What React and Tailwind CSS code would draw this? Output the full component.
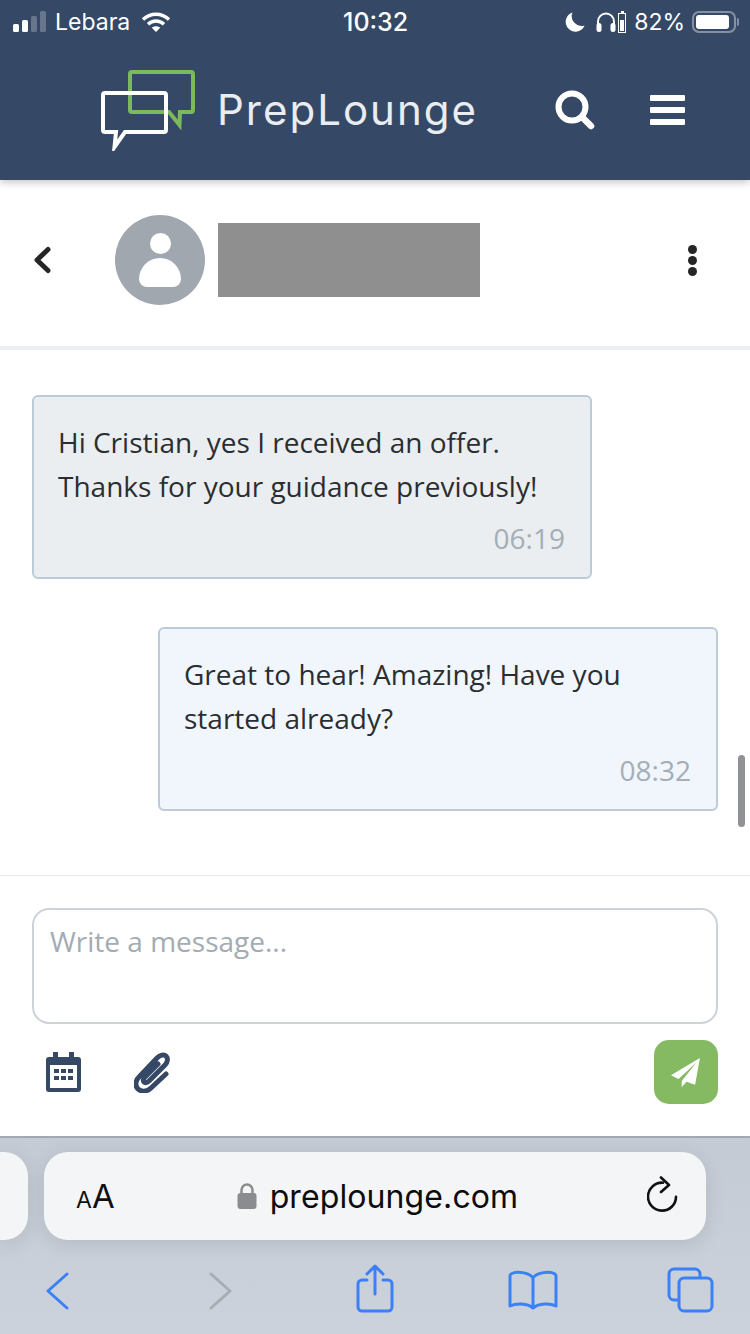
import React from 'react';

const sans = 'font-["Inter","Liberation_Sans",sans-serif]';
const body = 'font-["Open_Sans","Noto_Sans",sans-serif]';

const StatusBar = () => (
    <div className={`relative flex items-center h-[44px] pl-[13px] pr-[11px] text-white text-[23px] ${sans}`}>
        <svg width="34" height="22" viewBox="0 0 34 22" fill="white">
            <rect x="0" y="13" width="6" height="8" rx="1.5" />
            <rect x="9" y="9" width="6" height="12" rx="1.5" />
            <rect x="18" y="5" width="6" height="16" rx="1.5" opacity="0.25" />
            <rect x="27" y="0" width="6" height="21" rx="1.5" opacity="0.25" />
        </svg>
        <span className="ml-[8px] font-normal leading-none">Lebara</span>
        <svg className="ml-[11px]" width="30" height="22" viewBox="0 0 30 22" fill="none" stroke="white" strokeWidth="3.4">
            <path d="M2 8.500C9.500 1.500 20.500 1.500 28 8.500" />
            <path d="M7 13.200C11.800 9 18.200 9 23 13.200" />
            <path d="M15 21l-4.200-4.200c2.400-2 6-2 8.400 0z" fill="white" stroke="none" />
        </svg>
        <span className="absolute left-[343px] text-[25px] font-medium leading-none">10:32</span>
        <div className="ml-auto flex items-center">
            <svg width="20" height="20" viewBox="0 0 20 20" fill="white">
                <path d="M7.500 0.500A9.800 9.800 0 0 0 19.600 13.500 9.800 9.800 0 1 1 7.500 0.500z" />
            </svg>
            <svg className="ml-[11px]" width="20" height="22" viewBox="0 0 20 22" fill="none">
                <path d="M2 15V10.500a8 8 0 0 1 16 0V15" stroke="white" strokeWidth="2" />
                <rect x="0.500" y="12" width="5" height="9" rx="2.500" fill="white" />
                <rect x="14.500" y="12" width="5" height="9" rx="2.500" fill="white" />
            </svg>
            <svg className="ml-[2px]" width="9" height="22" viewBox="0 0 9 22" fill="none">
                <rect x="3" y="0" width="3" height="2" fill="white" />
                <rect x="0.500" y="2.500" width="7" height="19" stroke="white" />
                <rect x="2" y="9" width="4" height="11" fill="white" />
            </svg>
            <span className="ml-[7px] font-normal leading-none text-[23px]">82%</span>
            <div className="ml-[7px] flex items-center">
                <div className="w-[44px] h-[22px] rounded-[7px] border-2 border-white/40 p-[2px]">
                    <div className="w-[33px] h-full bg-white rounded-[3px]" />
                </div>
                <div className="ml-[1px] w-[2px] h-[8px] rounded-r-sm bg-white/40" />
            </div>
        </div>
    </div>
);

const Logo = () => (
    <svg width="94" height="82" viewBox="0 0 94 82" fill="none" strokeWidth="4">
        <path d="M31 3h59a2 2 0 0 1 2 2v36a2 2 0 0 1-2 2H79L78.500 56 68 43H31a2 2 0 0 1-2-2V5a2 2 0 0 1 2-2z" stroke="#7cb95c" />
        <path d="M4 24h59a2 2 0 0 1 2 2v35a2 2 0 0 1-2 2H24L13.500 78 15 63H4a2 2 0 0 1-2-2V26a2 2 0 0 1 2-2z" stroke="white" />
    </svg>
);

const Header = () => (
    <header className="relative z-10 h-[180px] shrink-0 bg-[#354966] shadow-[0_2px_8px_rgba(0,0,0,0.25)]">
        <StatusBar />
        <div className="flex items-center h-[136px] pl-[101px] pb-[4px]">
            <Logo />
            <span className={`ml-[22px] w-[260px] whitespace-nowrap text-[#e9edf1] text-[42px] leading-none font-normal tracking-[2px] ${sans}`}>PrepLounge</span>
            <svg className="ml-[76px]" width="42" height="42" viewBox="0 0 42 42" fill="none" stroke="white">
                <circle cx="19" cy="18" r="13.500" strokeWidth="6" />
                <path d="M29 28l9 9" strokeWidth="6.500" strokeLinecap="round" />
            </svg>
            <div className="ml-[55px] flex flex-col gap-[6px] w-[35px]">
                <div className="h-[6px] bg-white rounded-[1px]" />
                <div className="h-[6px] bg-white rounded-[1px]" />
                <div className="h-[6px] bg-white rounded-[1px]" />
            </div>
        </div>
    </header>
);

const ContactRow = () => (
    <div className="flex items-center h-[170px] shrink-0 pl-[33px] pr-[53px] pb-[6px] border-b-4 border-[#eceef0]">
        <svg width="18" height="28" viewBox="0 0 18 28" fill="none" stroke="#262626" strokeWidth="5" strokeLinecap="round" strokeLinejoin="round">
            <path d="M15 3.500L4 14l11 10.500" />
        </svg>
        <div className="ml-[64px] w-[90px] h-[90px] rounded-full bg-[#a0a7af] flex flex-col items-center pt-[18px]">
            <div className="w-[21px] h-[21px] rounded-full bg-white" />
            <div className="mt-[4px] w-[42px] h-[29px] bg-white rounded-t-[21px] rounded-b-[8px]" />
        </div>
        <div className="ml-[13px] w-[262px] h-[74px] bg-[#8f8f8f]" />
        <div className="ml-auto flex flex-col gap-[2px]">
            <div className="w-[9px] h-[9px] rounded-full bg-[#262626]" />
            <div className="w-[9px] h-[9px] rounded-full bg-[#262626]" />
            <div className="w-[9px] h-[9px] rounded-full bg-[#262626]" />
        </div>
    </div>
);

const Bubble = ({ lines, time, mine }) => (
    <div className={`w-[560px] h-[184px] rounded-[6px] border-2 border-[#bdcad8] pl-[24px] pr-[25px] pt-[23px] ${mine ? 'self-end bg-[#f1f6fd]' : 'bg-[#eaeef0]'}`}>
        {lines.map((line) => (
            <p key={line} className="text-[28px] leading-[44px] text-[#2b2e31] whitespace-nowrap">{line}</p>
        ))}
        <p className="mt-[12px] text-right text-[28px] leading-[36px] text-[#a5adb5]">{time}</p>
    </div>
);

const Composer = () => (
    <div className="h-[261px] shrink-0 border-t border-[#e6e8ea] px-[32px] pt-[32px]">
        <div className="h-[116px] rounded-[17px] border-2 border-[#cdd3d9] px-[16px] pt-[13px] text-[28px] leading-[36px] text-[#a3abb3]">
            Write a message...
        </div>
        <div className="flex items-center mt-[16px]">
            <svg className="ml-[14px]" width="35" height="40" viewBox="0 0 35 40" fill="#354966">
                <path fillRule="evenodd" d="M7 0h5v5h11V0h5v5h4a3 3 0 0 1 3 3v29a3 3 0 0 1-3 3H3a3 3 0 0 1-3-3V8a3 3 0 0 1 3-3h4zM4 13v23h27V13z" />
                <path d="M8 17h5v4H8zM15 17h5v4h-5zM22 17h5v4h-5zM8 24h5v4H8zM15 24h5v4h-5zM22 24h5v4h-5z" />
            </svg>
            <svg className="ml-[53px]" width="36" height="41" viewBox="0 0 36 41" fill="none" stroke="#354966" strokeLinecap="round">
                <path d="M32 22L17 36c-4 4-10 4-13 1-3-3-3-8 1-12L23 6c3-3 7-4 9-2s2 6-1 9L15 29c-2 2-4 2-5 1s-1-3 1-5L24 12" strokeWidth="5" />
            </svg>
            <button className="ml-auto w-[64px] h-[64px] rounded-[15px] bg-[#85ba63] flex items-center justify-center">
                <svg width="30" height="30" viewBox="0 0 28 28" fill="white">
                    <path d="M27 1L0 17l7 3.500L24 5 10 22.500V28l4.500-5 8 3z" />
                </svg>
            </button>
        </div>
    </div>
);

const SafariBar = () => (
    <div className={`h-[198px] shrink-0 border-t-2 border-[#a4a9b0] bg-gradient-to-b from-[#c4cbd4] to-[#cbd2db] ${sans}`}>
        <div className="flex gap-[16px] pt-[14px]">
            <div className="w-[28px] h-[88px] bg-[#f4f5f7] rounded-r-[24px] shadow-[0_4px_20px_rgba(0,0,0,0.1)]" />
            <div className="relative w-[662px] h-[88px] bg-[#f4f5f7] rounded-[24px] flex items-center shadow-[0_4px_20px_rgba(0,0,0,0.1)]">
                <span className="ml-[32px] text-[#111] leading-none"><span className="text-[23px]">A</span><span className="text-[33px]">A</span></span>
                <svg className="ml-[122px]" width="20" height="27" viewBox="0 0 20 27" fill="#8b8c90">
                    <path d="M4.500 11V7a5.500 5.500 0 0 1 11 0v4" fill="none" stroke="#8b8c90" strokeWidth="2.500" />
                    <rect x="0.500" y="10" width="19" height="16" rx="3" />
                </svg>
                <span className="ml-[13px] mt-[2px] text-[32px] leading-none text-[#0c0c0c] tracking-[0.1px]">preplounge.com</span>
                <svg className="absolute left-[603px] top-[24px]" width="32" height="38" viewBox="0 0 32 38" fill="none" stroke="#111" strokeWidth="2.600" strokeLinecap="round" strokeLinejoin="round">
                    <path d="M16 6.700A14 14 0 1 0 29 20.700" />
                    <path d="M14 1.500l8 7.500-8 7" />
                </svg>
            </div>
        </div>
        <div className="relative h-[94px]">
            <svg className="absolute left-[46px] top-[32px]" width="24" height="38" viewBox="0 0 24 38" fill="none" stroke="#3a80f6" strokeWidth="3" strokeLinecap="round" strokeLinejoin="round">
                <path d="M21 2L2 19l19 17" />
            </svg>
            <svg className="absolute left-[208px] top-[32px]" width="24" height="38" viewBox="0 0 24 38" fill="none" stroke="#a9adb3" strokeWidth="3" strokeLinecap="round" strokeLinejoin="round">
                <path d="M3 2l19 17L3 36" />
            </svg>
            <svg className="absolute left-[356px] top-[24px]" width="38" height="50" viewBox="0 0 38 50" fill="none" stroke="#3a80f6" strokeWidth="3" strokeLinecap="round" strokeLinejoin="round">
                <path d="M11 16H6a4 4 0 0 0-4 4v23a4 4 0 0 0 4 4h26a4 4 0 0 0 4-4V20a4 4 0 0 0-4-4h-5" />
                <path d="M19 30V3M11 10l8-8 8 8" />
            </svg>
            <svg className="absolute left-[508px] top-[30px]" width="50" height="40" viewBox="0 0 50 40" fill="none" stroke="#3a80f6" strokeWidth="3" strokeLinecap="round" strokeLinejoin="round">
                <path d="M25 8C21 2 8 1 3 4c-1 .5-1 1-1 2v30c6-3 17-3 23 2 6-5 17-5 23-2V6c0-1 0-1.500-1-2-5-3-18-2-22 4zM25 8v30" />
            </svg>
            <svg className="absolute left-[667px] top-[27px]" width="47" height="46" viewBox="0 0 47 46" fill="none" stroke="#3a80f6" strokeWidth="3" strokeLinejoin="round">
                <path d="M11 33H7a5 5 0 0 1-5-5V7a5 5 0 0 1 5-5h21a5 5 0 0 1 5 5v4" />
                <rect x="12" y="11" width="33" height="33" rx="5" />
            </svg>
        </div>
    </div>
);

const App = () => (
    <div className={`flex flex-col w-[750px] h-[1334px] bg-white overflow-hidden ${body}`}>
        <Header />
        <ContactRow />
        <main className="relative flex-1 flex flex-col gap-[48px] px-[32px] pt-[45px]">
            <Bubble lines={['Hi Cristian, yes I received an offer.', 'Thanks for your guidance previously!']} time="06:19" />
            <Bubble mine lines={['Great to hear! Amazing! Have you', 'started already?']} time="08:32" />
            {/* scroll thumb */}
            <div className="absolute left-[738px] top-[405px] w-[7px] h-[72px] rounded-full bg-[#8f9195]" />
        </main>
        <Composer />
        <SafariBar />
    </div>
);

export default App;
